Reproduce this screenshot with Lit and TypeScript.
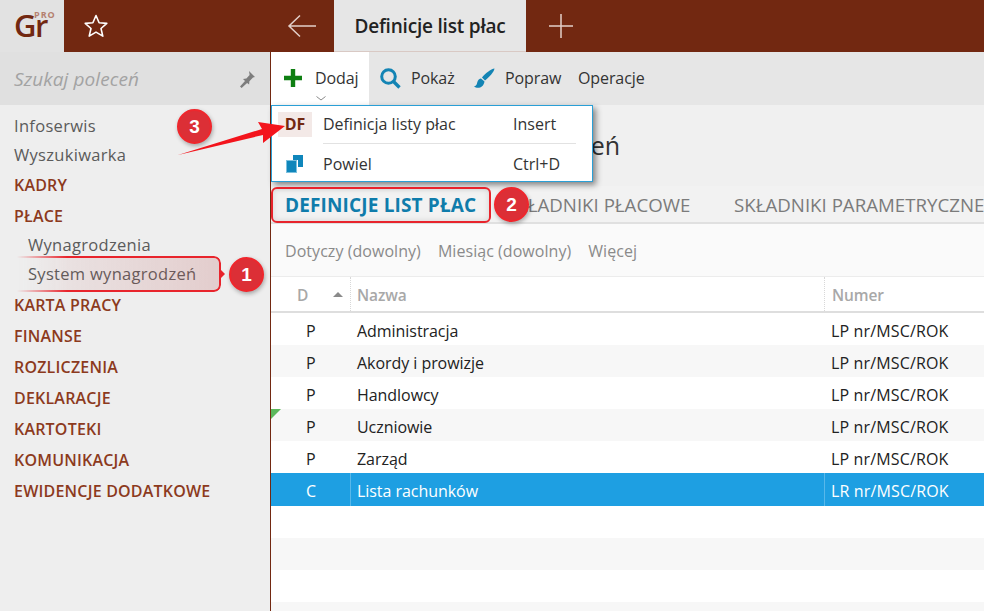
import { LitElement, html, css } from "lit";
import { customElement } from "lit/decorators.js";

const rows = [
  ["P", "Administracja", "LP nr/MSC/ROK"],
  ["P", "Akordy i prowizje", "LP nr/MSC/ROK"],
  ["P", "Handlowcy", "LP nr/MSC/ROK"],
  ["P", "Uczniowie", "LP nr/MSC/ROK"],
  ["P", "Zarząd", "LP nr/MSC/ROK"],
  ["C", "Lista rachunków", "LR nr/MSC/ROK"],
  ["", "", ""],
  ["", "", ""],
  ["", "", ""],
  ["", "", ""],
];

@customElement("app-root")
export class AppRoot extends LitElement {
  static styles = css`
    :host {
      display: block;
      width: 984px;
      height: 611px;
      overflow: hidden;
      position: relative;
      font-family: "Open Sans", "Noto Sans", sans-serif;
      font-size: 16px;
      color: #222;
      background: #fff;
    }
    .top { display: flex; height: 52px; background: #722811; }
    .logo { width: 64px; background: #e2e2e2; position: relative; color: #722811; }
    .gr { position: absolute; left: 14px; top: 16px; font-size: 31px; font-weight: 600; line-height: 18px; letter-spacing: -1.4px; }
    .pro { position: absolute; left: 34px; top: 11px; font-size: 9px; font-weight: 700; line-height: 8px; color: #b5806f; letter-spacing: 1px; }
    .star { width: 64px; display: flex; align-items: center; justify-content: center; }
    .back { width: 206px; display: flex; align-items: center; justify-content: flex-end; padding-right: 17px; box-sizing: border-box; }
    .tab { width: 192px; background: #e6e6e6; display: flex; align-items: center; justify-content: center; font-size: 19px; font-weight: 600; color: #222; border-bottom: 1px solid #d9c9c4; box-sizing: border-box; white-space: nowrap; letter-spacing: -.2px; }
    .plus { width: 70px; display: flex; align-items: center; justify-content: center; }
    .body { display: flex; height: 559px; }
    .side { width: 270px; background: #eeeeee; flex: none; }
    .divider { width: 1px; background: #722811; flex: none; }
    .search { height: 53px; background: #e0e0e0; display: flex; align-items: center; justify-content: space-between; padding: 0 14px; box-sizing: border-box; font-style: italic; color: #a3a3a3; font-size: 19px; letter-spacing: .1px; }
    .nav { padding-top: 6px; display: flex; flex-direction: column; }
    .nav div { padding-left: 14px; }
    .item { height: 29px; line-height: 30px; color: #5b5b5b; font-size: 16.5px; letter-spacing: .3px; white-space: nowrap; }
    .nav .item.sub { padding-left: 28px; line-height: 28px; }
    .group { height: 31px; line-height: 32px; color: #8c3a1d; font-size: 16px; font-weight: 600; letter-spacing: .2px; white-space: nowrap; }
    .main { flex: 1; min-width: 0; background: #fff; display: flex; flex-direction: column; }
    .toolbar { height: 53px; background: #e6e6e6; display: flex; align-items: stretch; flex: none; color: #333; letter-spacing: -.1px; }
    .tool { display: flex; align-items: center; padding-bottom: 1px; }
    .tool svg { flex: none; }
    .dodaj { width: 98px; background: #fff; padding-left: 13px; box-sizing: border-box; gap: 13px; position: relative; }
    .chev { position: absolute; left: 45px; top: 44px; }
    .pokaz { padding-left: 11px; gap: 10px; width: 94px; box-sizing: border-box; }
    .popraw { gap: 10px; width: 115px; box-sizing: border-box; padding-left: 11px; }
    .title { height: 81px; background: #f0f0f0; font-size: 25px; padding: 20px 0 0 102px; box-sizing: border-box; color: #333; flex: none; line-height: 40px; white-space: nowrap; }
    .tabs { height: 38px; background: #f2f2f2; border-bottom: 2px solid #e0e0e0; box-sizing: border-box; display: flex; align-items: center; padding: 1px 0 0 14px; font-size: 18.7px; white-space: nowrap; color: #7b7b7b; flex: none; }
    .tabs .on { color: #0f7cab; font-weight: 700; width: 221px; flex: none; font-size: 19px; letter-spacing: .15px; }
    .tabs .t2 { width: 228px; flex: none; }
    .filters { height: 53px; background: #fafafa; border-bottom: 1px solid #ececec; box-sizing: border-box; display: flex; align-items: center; gap: 17px; padding: 2px 0 0 14px; color: #8a8a8a; flex: none; letter-spacing: .05px; white-space: nowrap; }
    .grid { flex: 1; overflow: hidden; }
    .head, .row { display: grid; grid-template-columns: 79px 474px 1fr; }
    .head { height: 36px; border-bottom: 2px solid #dedede; box-sizing: border-box; color: #a8a8a8; font-weight: 600; font-size: 15.5px; letter-spacing: -.1px; }
    .head > div { display: flex; align-items: center; position: relative; padding: 2px 0 0 7px; border-left: 1px dotted #d8d8d8; }
    .head > div:nth-child(2) { padding-left: 6px; }
    .head > div:first-child { border-left: none; padding-left: 26px; }
    .arrow { position: absolute; left: 62px; top: 15px; width: 0; height: 0; border: 5px solid transparent; border-top: none; border-bottom: 5px solid #8a8a8a; }
    .rows { display: flex; flex-direction: column; }
    .row { height: 32px; color: #222; letter-spacing: -.05px; grid-template-rows: 100%; }
    .row:nth-child(even) { background: #f7f7f7; }
    .row > div { padding: 3px 0 0 6px; line-height: 30px; box-sizing: border-box; border-left: 1px solid transparent; white-space: nowrap; position: relative; }
    .row > div:first-child { border-left: none; padding-left: 35px; }
    .row > div:last-child { letter-spacing: .15px; }
    .row.sel { background: #1e9fe2; color: #fff; height: 33px; }
    .row.sel > div { border-left-color: #58b8ea; }
    .row.sel > div:first-child { border-left: none; }
    .flag { position: absolute; left: 0; top: 0; width: 0; height: 0; border-top: 10px solid #5cb85c; border-right: 10px solid transparent; }
    .menu { position: absolute; left: 271px; top: 105px; width: 322px; height: 77px; background: #fff; border: 1px solid #2a9fd6; box-sizing: border-box; box-shadow: 3px 3px 6px rgba(0,0,0,.45); color: #333; }
    .mrow { display: grid; grid-template-columns: 51px 190px 1fr; align-items: center; }
    .mrow.a { height: 37px; padding-bottom: 1px; box-sizing: border-box; }
    .mrow.b { height: 38px; padding-top: 2px; box-sizing: border-box; }
    .df { margin-left: 6px; width: 34px; height: 25px; background: #f3e9e7; color: #722811; font-weight: 700; display: flex; align-items: center; justify-content: center; }
    .ic { margin-left: 14px; display: flex; }
    .sep { height: 1px; background: #e2e2e2; margin: 0 16px 0 51px; }
    .box { position: absolute; box-sizing: border-box; }
    .box1 { left: 17px; top: 256px; width: 204px; height: 36px; border-radius: 0 7px 7px 0; border: 2px solid #e8242c; border-left: none; background: linear-gradient(90deg, rgba(190,90,90,.04), rgba(190,90,90,.22)); -webkit-mask: linear-gradient(90deg, transparent 0, #000 50px); mask: linear-gradient(90deg, transparent 0, #000 50px); }
    .box2 { left: 271px; top: 187px; width: 220px; height: 36px; border: 2px solid #e8242c; border-radius: 6px; box-shadow: inset 0 0 6px rgba(0,0,0,.12); }
    .badge { position: absolute; width: 35px; height: 35px; border-radius: 50%; background: #dc2f36; border: 2px solid #f0262c; box-sizing: border-box; color: #fff; font-family: "Liberation Sans", sans-serif; font-weight: 700; font-size: 19px; display: flex; align-items: center; justify-content: center; box-shadow: 1px 2px 4px rgba(0,0,0,.3); }
    .b1 { left: 229px; top: 257px; }
    .b2 { left: 494px; top: 187px; }
    .b3 { left: 177px; top: 109px; }
    .over { position: absolute; left: 0; top: 0; pointer-events: none; }
  `;

  render() {
    return html`
      <div class="top">
        <div class="logo"><span class="gr">Gr</span><span class="pro">PRO</span></div>
        <div class="star">
          <svg width="26" height="26" viewBox="0 0 26 26"><path d="M13 2.500l3.100 7.200 7.700.7-5.800 5.100 1.800 7.600-6.800-4-6.800 4 1.800-7.600-5.800-5.100 7.700-.7z" fill="none" stroke="#fff" stroke-width="1.600" stroke-linejoin="round"/></svg>
        </div>
        <div class="back">
          <svg width="30" height="24" viewBox="0 0 30 24"><path d="M29 12H2M13 1.500L2 12l11 10.500" fill="none" stroke="#e3cfc9" stroke-width="1.500"/></svg>
        </div>
        <div class="tab">Definicje list płac</div>
        <div class="plus">
          <svg width="24" height="24" viewBox="0 0 24 24"><path d="M12 0v24M0 12h24" fill="none" stroke="#e3cfc9" stroke-width="1.500"/></svg>
        </div>
      </div>
      <div class="body">
        <div class="side">
          <div class="search">
            <span>Szukaj poleceń</span>
            <svg width="18" height="18" viewBox="0 0 18 18"><path d="M11 1l6 6-2 .6-3.600 3.600-.3 3.300-2-1.600L3.600 18 2 16.400l5-5.500-2-2 3.400-.3 3.200-3.600z" fill="#7d7d7d"/></svg>
          </div>
          <div class="nav">
            <div class="item">Infoserwis</div>
            <div class="item">Wyszukiwarka</div>
            <div class="group">KADRY</div>
            <div class="group">PŁACE</div>
            <div class="item sub">Wynagrodzenia</div>
            <div class="item sub">System wynagrodzeń</div>
            <div class="group">KARTA PRACY</div>
            <div class="group">FINANSE</div>
            <div class="group">ROZLICZENIA</div>
            <div class="group">DEKLARACJE</div>
            <div class="group">KARTOTEKI</div>
            <div class="group">KOMUNIKACJA</div>
            <div class="group">EWIDENCJE DODATKOWE</div>
          </div>
        </div>
        <div class="divider"></div>
        <div class="main">
          <div class="toolbar">
            <div class="tool dodaj">
              <svg width="18" height="18" viewBox="0 0 18 18"><path d="M9 0v18M0 9h18" stroke="#0f7f12" stroke-width="4.400" fill="none"/></svg>
              <span>Dodaj</span>
              <svg class="chev" width="10" height="5" viewBox="0 0 10 5"><path d="M.5.5L5 4 9.500.5" fill="none" stroke="#8a8a8a" stroke-width="1"/></svg>
            </div>
            <div class="tool pokaz">
              <svg width="21" height="21" viewBox="0 0 21 21"><circle cx="8.500" cy="8.500" r="6.800" fill="none" stroke="#1384b4" stroke-width="3"/><path d="M13.500 13.500l6 6" stroke="#1384b4" stroke-width="3.400"/></svg>
              <span>Pokaż</span>
            </div>
            <div class="tool popraw">
              <svg width="21" height="21" viewBox="0 0 21 21"><path d="M20.500.5c-3.500.5-9.500 5-12.500 9l3 3c4-3 9-8.500 9.500-12zM7 10.500c-3 .5-3.500 3-4 5-.3 1.500-1.500 2.500-3 3 3.500 2.500 9.500 1.500 10.500-5z" fill="#1384b4"/></svg>
              <span>Popraw</span>
            </div>
            <div class="tool"><span>Operacje</span></div>
          </div>
          <div class="title">System wynagrodzeń</div>
          <div class="tabs">
            <span class="on">DEFINICJE LIST PŁAC</span>
            <span class="t2">SKŁADNIKI PŁACOWE</span>
            <span>SKŁADNIKI PARAMETRYCZNE</span>
          </div>
          <div class="filters"><span>Dotyczy (dowolny)</span><span>Miesiąc (dowolny)</span><span>Więcej</span></div>
          <div class="grid">
            <div class="head"><div>D<span class="arrow"></span></div><div>Nazwa</div><div>Numer</div></div>
            <div class="rows">
              ${rows.map((r, i) => html`<div class="row ${i === 5 ? "sel" : ""}">
                <div>${i === 3 ? html`<span class="flag"></span>` : ""}${r[0]}</div><div>${r[1]}</div><div>${r[2]}</div>
              </div>`)}
            </div>
          </div>
        </div>
      </div>

      <div class="menu">
        <div class="mrow a"><span class="df">DF</span><span>Definicja listy płac</span><span>Insert</span></div>
        <div class="sep"></div>
        <div class="mrow b">
          <span class="ic"><svg width="18" height="18" viewBox="0 0 18 18"><path d="M7 0h10v12h-5V5H7z" fill="#0f86bb"/><rect x=".5" y="5.500" width="10" height="12" fill="#0f86bb" stroke="#7cc0de"/></svg></span>
          <span>Powiel</span><span>Ctrl+D</span>
        </div>
      </div>

      <div class="box box1"></div>
      <div class="box box2"></div>
      <svg class="over" width="984" height="611" viewBox="0 0 984 611">
        <path d="M221 270l4 4-4 4z" fill="#e8242c"/>
        <path d="M178 155L262 129 258 122 285 126 263 143 263 135z" fill="#f3141c"/>
      </svg>
      <div class="badge b1">1</div>
      <div class="badge b2">2</div>
      <div class="badge b3">3</div>
    `;
  }
}
